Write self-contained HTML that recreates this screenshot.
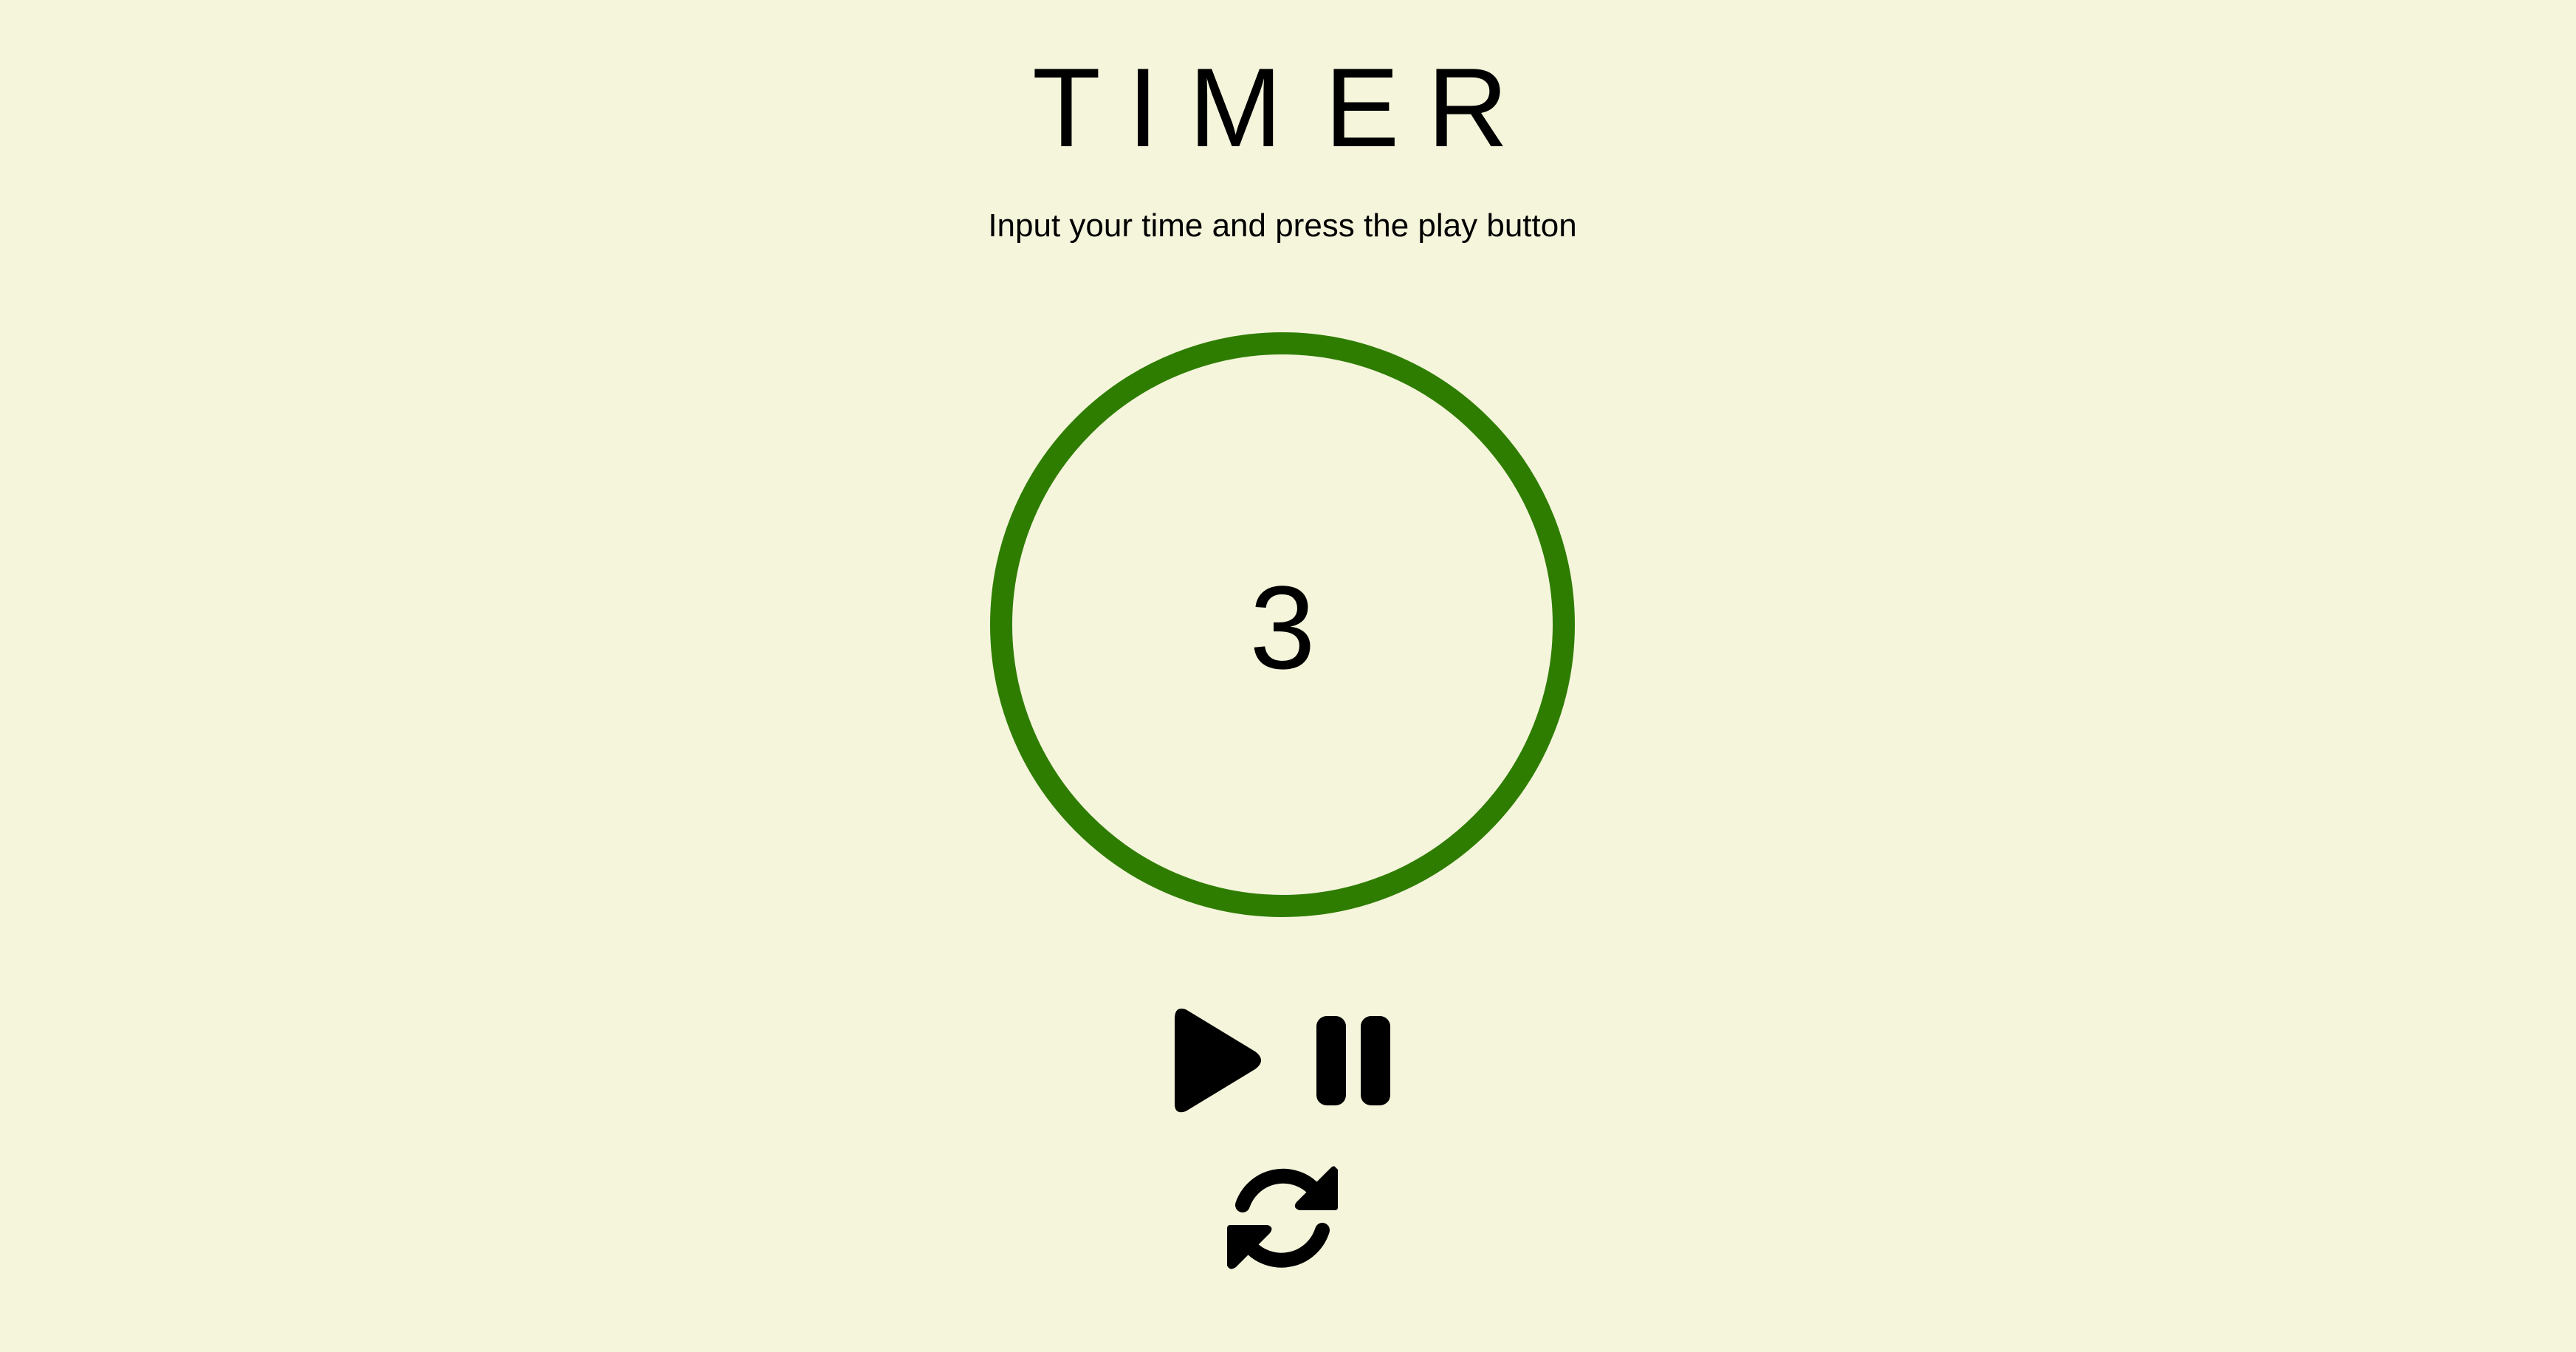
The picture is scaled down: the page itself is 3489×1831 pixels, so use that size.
<!DOCTYPE html>
<html><head><meta charset="utf-8"><style>
html,body{margin:0;padding:0;}
body{width:3489px;height:1831px;background:#f5f5dc;position:relative;overflow:hidden;font-family:"Liberation Sans",sans-serif;color:#000;}
.l{position:absolute;top:70px;font-size:152px;line-height:1;}
.sub{position:absolute;left:0;width:3474px;text-align:center;top:284px;font-size:44px;line-height:1;}
.three{position:absolute;left:1637px;width:200px;text-align:center;top:770px;font-size:160px;line-height:1;}
svg{position:absolute;left:0;top:0;}
</style></head><body>
<div class="l" style="left:1398px">T</div>
<div class="l" style="left:1527px">I</div>
<div class="l" style="left:1610px">M</div>
<div class="l" style="left:1794px">E</div>
<div class="l" style="left:1933px">R</div>
<div class="sub">Input your time and press the play button</div>
<svg width="3489" height="1831" viewBox="0 0 3489 1831">
<circle cx="1737" cy="846" r="381" fill="none" stroke="#2e7d00" stroke-width="30"/>
<path d="M1606,1367 L1700,1424 Q1716,1436 1700,1448 L1606,1505 Q1591,1510 1591,1495 L1591,1380 Q1591,1362 1606,1367 Z" fill="#000"/>
<rect x="1783" y="1376" width="40" height="121" rx="14" fill="#000"/>
<rect x="1843" y="1376" width="40" height="121" rx="14" fill="#000"/>
<path d="M1683,1632 A58,58 0 0 1 1781,1612" fill="none" stroke="#000" stroke-width="20" stroke-linecap="round"/>
<path d="M1808,1580 L1812,1584 L1812,1635 Q1812,1639 1808,1639 L1760,1639 Q1750,1636 1756,1628 L1802,1582 Q1806,1578 1808,1580 Z" fill="#000"/>
<path d="M1791,1666 A58,58 0 0 1 1693,1688" fill="none" stroke="#000" stroke-width="20" stroke-linecap="round"/>
<path d="M1666,1659 L1717,1659 Q1726,1662 1720,1670 L1674,1716 Q1666,1722 1662,1714 L1662,1664 Q1662,1659 1666,1659 Z" fill="#000"/>
</svg>
<div class="three">3</div>
</body></html>
